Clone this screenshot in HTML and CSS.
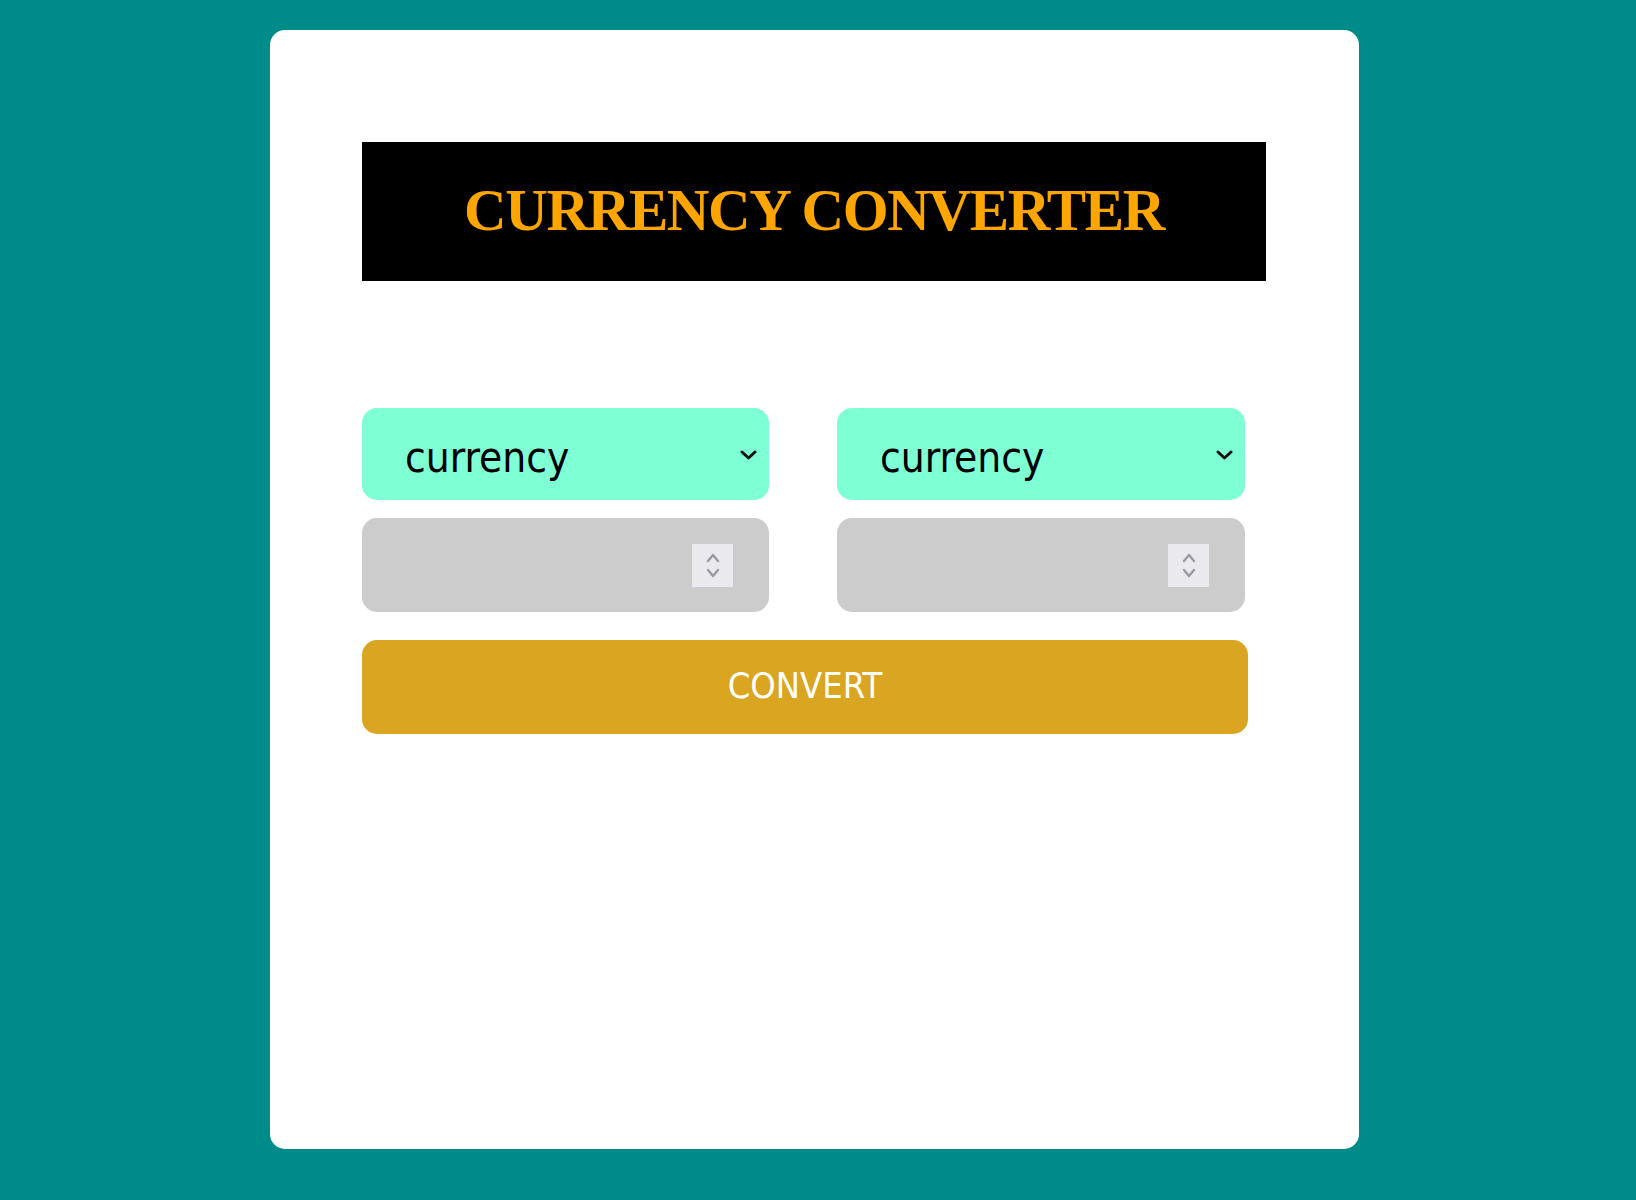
FILE: index.html
```html
<!DOCTYPE html>
<html lang="en">
<head>
<meta charset="utf-8">
<title>Currency Converter</title>
<link rel="stylesheet" href="styles.css">
</head>
<body>
<main class="card">
  <h1 class="title">CURRENCY CONVERTER</h1>
  <form class="converter">
    <div class="grid">
      <div class="select-wrap">
        <select class="currency-select"><option>currency</option></select>
        <svg class="chevron" width="17" height="12" viewBox="0 0 17 12"><path d="M2 3 L8.5 9 L15 3" fill="none" stroke="#111" stroke-width="3" stroke-linecap="round" stroke-linejoin="round"/></svg>
      </div>
      <div class="select-wrap">
        <select class="currency-select"><option>currency</option></select>
        <svg class="chevron" width="17" height="12" viewBox="0 0 17 12"><path d="M2 3 L8.5 9 L15 3" fill="none" stroke="#111" stroke-width="3" stroke-linecap="round" stroke-linejoin="round"/></svg>
      </div>
      <div class="amount">
        <input class="amount-input" type="text" aria-label="amount">
        <div class="spinner">
          <svg width="14" height="11" viewBox="0 0 14 11"><path d="M2 9 L7 3 L12 9" fill="none" stroke="#9a9aa6" stroke-width="2.4" stroke-linecap="round" stroke-linejoin="round"/></svg>
          <svg width="14" height="11" viewBox="0 0 14 11"><path d="M2 2 L7 8 L12 2" fill="none" stroke="#9a9aa6" stroke-width="2.4" stroke-linecap="round" stroke-linejoin="round"/></svg>
        </div>
      </div>
      <div class="amount">
        <input class="amount-input" type="text" aria-label="converted amount">
        <div class="spinner">
          <svg width="14" height="11" viewBox="0 0 14 11"><path d="M2 9 L7 3 L12 9" fill="none" stroke="#9a9aa6" stroke-width="2.4" stroke-linecap="round" stroke-linejoin="round"/></svg>
          <svg width="14" height="11" viewBox="0 0 14 11"><path d="M2 2 L7 8 L12 2" fill="none" stroke="#9a9aa6" stroke-width="2.4" stroke-linecap="round" stroke-linejoin="round"/></svg>
        </div>
      </div>
    </div>
    <button type="button" class="convert-btn">CONVERT</button>
  </form>
</main>
</body>
</html>
```
FILE: styles.css
```css
html, body {
  margin: 0;
  padding: 0;
}
body {
  background: #008b8b;
  min-height: 1200px;
  padding-top: 30px;
  box-sizing: border-box;
}
.card {
  width: 1089px;
  height: 1119px;
  margin-left: 270px;
  background: #ffffff;
  border-radius: 15px;
  padding: 112px 0 0 92px;
  box-sizing: border-box;
}
.title {
  margin: 0;
  width: 904px;
  height: 139px;
  background: #000000;
  color: #ffa500;
  font-family: "Liberation Serif", "Times New Roman", serif;
  font-weight: bold;
  font-size: 59px;
  letter-spacing: -1.4px;
  display: flex;
  align-items: center;
  justify-content: center;
  padding-bottom: 2px;
  box-sizing: border-box;
}
.converter {
  margin-top: 127px;
  width: 886px;
  display: flex;
  flex-direction: column;
  gap: 28px;
}
.grid {
  display: grid;
  grid-template-columns: 407px 408px;
  column-gap: 68px;
  row-gap: 18px;
}
.select-wrap {
  height: 92px;
  background: #7fffd4;
  border-radius: 15px;
  display: flex;
  align-items: center;
  padding-right: 12px;
}
.currency-select {
  flex: 1;
  min-width: 0;
  height: 100%;
  appearance: none;
  -webkit-appearance: none;
  border: none;
  outline: none;
  background: transparent;
  font-family: "DejaVu Sans Condensed", "DejaVu Sans", sans-serif;
  font-stretch: condensed;
  font-size: 42px;
  color: #000;
  padding: 6px 0 0 43px;
}
.chevron {
  flex: none;
  display: block;
  margin-top: 2px;
}
.amount {
  height: 94px;
  background: #cccccc;
  border-radius: 15px;
  display: flex;
  align-items: center;
  padding-right: 36px;
}
.amount-input {
  flex: 1;
  min-width: 0;
  height: 100%;
  border: none;
  outline: none;
  background: transparent;
  font-size: 36px;
}
.spinner {
  flex: none;
  width: 41px;
  height: 43px;
  background: #e9e9ee;
  display: flex;
  flex-direction: column;
  align-items: center;
  justify-content: center;
  gap: 5px;
}
.spinner svg {
  display: block;
}
.convert-btn {
  width: 886px;
  height: 94px;
  background: #daa520;
  border: none;
  border-radius: 15px;
  color: #ffffff;
  font-family: "DejaVu Sans Condensed", "DejaVu Sans", sans-serif;
  font-stretch: condensed;
  font-size: 36px;
  padding: 0 0 4px 0;
  cursor: pointer;
}
```
